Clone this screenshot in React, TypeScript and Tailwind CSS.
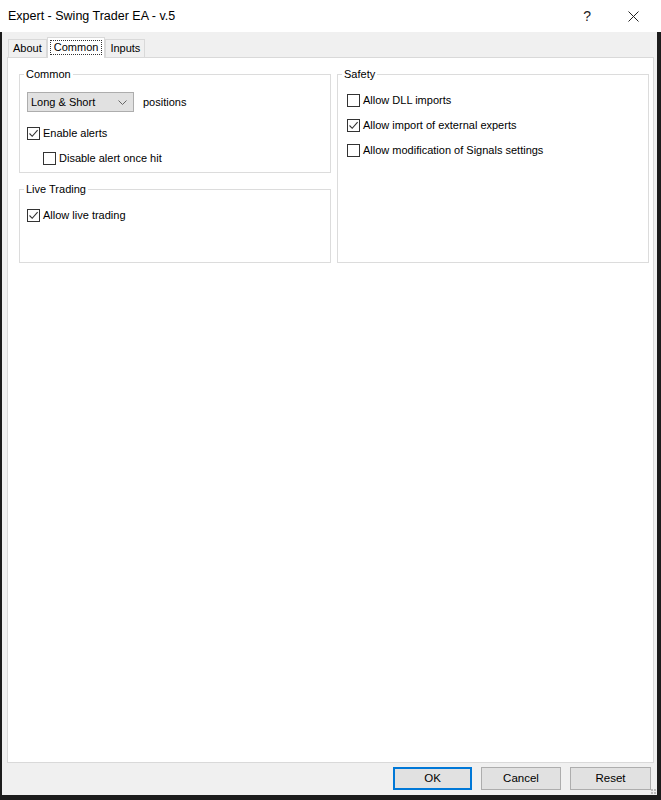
import type { ReactNode } from "react"

const font = { fontFamily: '"Liberation Sans", Arial, sans-serif' }

function CheckBox({ checked, label }: { checked?: boolean; label: string }) {
  return (
    <div className="flex h-[16px] items-center gap-[3px]">
      <span className="flex h-[13px] w-[13px] shrink-0 items-center justify-center border border-[#333333] bg-white">
        {checked && (
          <svg width="11" height="11" viewBox="0 0 11 11" fill="none">
            <path d="M1.5 5.5 L4.2 8.3 L9.6 2.2" stroke="#333333" strokeWidth="1.1" />
          </svg>
        )}
      </span>
      <span className="text-[11px] leading-[16px] text-black">{label}</span>
    </div>
  )
}

function Group({ title, className, children }: { title: string; className?: string; children: ReactNode }) {
  return (
    <fieldset className={`flex flex-col border border-[#dcdcdc] ${className ?? ""}`}>
      <legend className="ml-[4px] px-[2px] text-[11px] leading-[16px] text-black">{title}</legend>
      {children}
    </fieldset>
  )
}

function Tab({ label, active }: { label: string; active?: boolean }) {
  if (active) {
    return (
      <div className="relative z-10 -mb-px flex h-[21px] items-start border border-b-0 border-[#d9d9d9] bg-white px-[2px] pt-[2px]">
        <span className="border border-dotted border-[#333333] px-[3px] text-[11px] leading-[13px] text-black">{label}</span>
      </div>
    )
  }
  return (
    <div className="flex h-[18px] items-center border border-b-0 border-[#d9d9d9] bg-[#f0f0f0] px-[4px] text-[11px] text-black">
      {label}
    </div>
  )
}

function Button({ label, focused }: { label: string; focused?: boolean }) {
  return (
    <button
      className={`flex h-[23px] items-center justify-center bg-[#e1e1e1] text-[11.5px] text-black ${
        focused ? "border-2 border-[#0078d7]" : "border border-[#adadad]"
      }`}
      style={{ width: label === "OK" ? 79 : label === "Cancel" ? 80 : 81 }}
    >
      {label}
    </button>
  )
}

export default function App() {
  return (
    <div className="flex h-[800px] w-[661px] flex-col bg-[#1c1c1c]" style={font}>
      {/* title bar */}
      <div className="flex h-[32px] shrink-0 items-center bg-white pl-[8px]">
        <span className="flex-1 text-[12.5px] text-black">Expert - Swing Trader EA - v.5</span>
        <span className="mr-[37px] text-[14px] text-[#222222]">?</span>
        <svg className="mr-[22px]" width="11" height="11" viewBox="0 0 11 11">
          <path d="M0.5 0.5 L10.5 10.5 M10.5 0.5 L0.5 10.5" stroke="#222222" strokeWidth="1" />
        </svg>
      </div>

      <div className="flex flex-1">
        <div className="w-[2px] shrink-0" />
        <div className="flex w-[655px] flex-col bg-[#f0f0f0]">
          {/* tab headers */}
          <div className="flex h-[25px] items-end pl-[6px]">
            <Tab label="About" />
            <Tab label="Common" active />
            <Tab label="Inputs" />
          </div>

          {/* tab page */}
          <div className="ml-[5px] flex h-[706px] w-[647px] gap-[6px] border border-[#d9d9d9] bg-white pl-[11px] pt-[8px]">
            <div className="flex w-[312px] flex-col gap-[8px] self-start">
              <Group title="Common" className="h-[107px]">
                <div className="flex flex-col pl-[7px] pt-[10px]">
                  <div className="flex items-center gap-[9px]">
                    <div className="flex h-[20px] w-[107px] items-center justify-between border border-[#adadad] bg-[#e1e1e1] pl-[3px] pr-[6px] text-[11px] text-black">
                      Long &amp; Short
                      <svg width="9" height="5" viewBox="0 0 9 5" fill="none">
                        <path d="M0.5 0.5 L4.5 4.5 L8.5 0.5" stroke="#666666" strokeWidth="1" />
                      </svg>
                    </div>
                    <span className="text-[11px] text-black">positions</span>
                  </div>
                  <div className="mt-[13px]">
                    <CheckBox checked label="Enable alerts" />
                  </div>
                  <div className="mt-[9px] pl-[16px]">
                    <CheckBox label="Disable alert once hit" />
                  </div>
                </div>
              </Group>
              <Group title="Live Trading" className="h-[82px]">
                <div className="pl-[7px] pt-[10px]">
                  <CheckBox checked label="Allow live trading" />
                </div>
              </Group>
            </div>

            <Group title="Safety" className="h-[197px] w-[312px]">
              <div className="flex flex-col gap-[9px] pl-[9px] pt-[10px]">
                <CheckBox label="Allow DLL imports" />
                <CheckBox checked label="Allow import of external experts" />
                <CheckBox label="Allow modification of Signals settings" />
              </div>
            </Group>
          </div>

          {/* dialog buttons */}
          <div className="relative flex flex-1 items-start justify-end gap-[9px] pr-[6px] pt-[4px]">
            <Button label="OK" focused />
            <Button label="Cancel" />
            <Button label="Reset" />
            <div className="absolute bottom-[1px] right-[1px] grid grid-cols-2 gap-[1px]">
              <span className="h-[2px] w-[2px] bg-[#bcbcbc]" />
              <span className="h-[2px] w-[2px] bg-[#bcbcbc]" />
              <span className="h-[2px] w-[2px] bg-[#bcbcbc]" />
              <span className="h-[2px] w-[2px] bg-[#bcbcbc]" />
            </div>
          </div>
        </div>
      </div>
      <div className="h-[5px] shrink-0" />
    </div>
  )
}
